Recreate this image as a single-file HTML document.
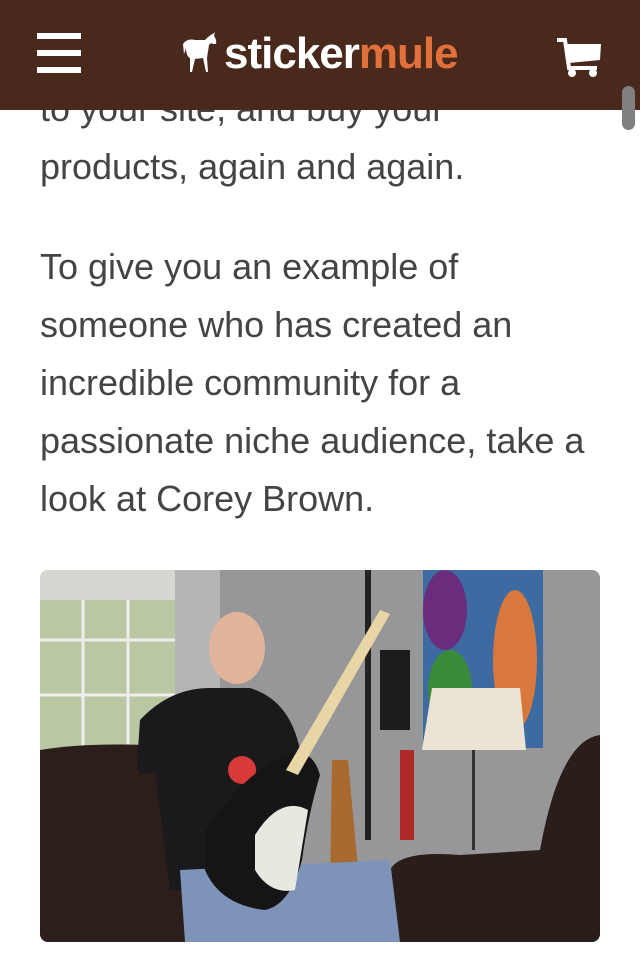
<!DOCTYPE html>
<html><head><meta charset="utf-8"><style>
html,body{margin:0;padding:0;width:640px;height:959px;overflow:hidden;background:#fff}
body{font-family:"Liberation Sans",sans-serif;color:#444;position:relative}
.hdr{position:absolute;left:0;top:0;width:640px;height:110px;background:#48291c;z-index:2}
.txt{position:absolute;left:40px;top:0;font-size:36px;line-height:58px;margin:0;width:600px;white-space:nowrap}
.sb{position:absolute;left:622px;top:86px;width:13px;height:44px;border-radius:7px;background:#808080;z-index:3}
.img{position:absolute;left:40px;top:570px;width:560px;height:372px;border-radius:8px;overflow:hidden}
</style></head><body>
<div class="hdr">
 <div style="position:absolute;left:37px;top:33px;width:44px;height:6px;background:#fff"></div>
 <div style="position:absolute;left:37px;top:50px;width:44px;height:6px;background:#fff"></div>
 <div style="position:absolute;left:37px;top:67px;width:44px;height:6px;background:#fff"></div>
 <svg style="position:absolute;left:180px;top:32px" width="42" height="42" viewBox="0 0 40 42"><path d="M2 12 Q6 6 14 8 L24 8 Q30 2 32 2 L34 0 L33 4 Q36 8 35 12 L32 12 Q30 10 28 13 L26 26 L27 40 L25 40 L22 26 L14 27 L11 40 L9 40 L9 26 Q5 24 5 16 L3 22 Z" fill="#fff"/></svg>
 <div style="position:absolute;left:224px;top:24px;font-size:44px;font-weight:bold;letter-spacing:-1px;line-height:60px;color:#fff">sticker<span style="color:#e2703a">mule</span></div>
 <svg style="position:absolute;left:555px;top:38px" width="48" height="40" viewBox="0 0 48 40"><path d="M2 2 H10 L14 30 H42" stroke="#fff" stroke-width="4" fill="none"/><path d="M10 6 H46 L45 22 L14 25 Z" fill="#fff"/><circle cx="17" cy="35" r="4" fill="#fff"/><circle cx="38" cy="35" r="4" fill="#fff"/></svg>
</div>
<div class="sb"></div>
<div class="txt" style="top:80px">to your site, and buy your<br>products, again and again.</div>
<div class="txt" style="top:238px">To give you an example of<br>someone who has created an<br>incredible community for a<br>passionate niche audience, take a<br>look at Corey Brown.</div>
<div class="img"><svg width="560" height="372" viewBox="0 0 560 372">
<rect width="560" height="372" fill="#97979a"/>
<rect x="135" y="0" width="45" height="372" fill="#b5b5b8"/>
<rect x="0" y="0" width="135" height="30" fill="#d8d6d0"/>
<rect x="0" y="30" width="135" height="150" fill="#b9c7a2"/>
<g stroke="#eee" stroke-width="3"><line x1="43" y1="30" x2="43" y2="180"/><line x1="88" y1="30" x2="88" y2="180"/><line x1="0" y1="70" x2="135" y2="70"/><line x1="0" y1="125" x2="135" y2="125"/></g>
<rect x="383" y="0" width="120" height="178" fill="#3d6aa0"/>
<ellipse cx="475" cy="90" rx="22" ry="70" fill="#d9783c"/>
<ellipse cx="405" cy="40" rx="22" ry="40" fill="#6a2d7e"/>
<ellipse cx="410" cy="120" rx="22" ry="40" fill="#3a8a3a"/>
<path d="M392 118 L480 118 L486 180 L382 180 Z" fill="#ece4d2"/>
<rect x="432" y="180" width="3" height="100" fill="#333"/>
<rect x="325" y="0" width="6" height="270" fill="#222"/>
<path d="M292 190 L308 190 L320 320 L290 320 Z" fill="#a86a2e"/>
<rect x="340" y="80" width="30" height="80" fill="#1c1c1c"/>
<rect x="360" y="180" width="14" height="90" fill="#b02a2a"/>
<path d="M0 180 Q60 170 150 178 L150 372 L0 372 Z" fill="#2c1f1b"/>
<path d="M350 300 Q360 280 420 285 L500 280 Q520 170 560 165 L560 372 L350 372 Z" fill="#2a1e1b"/>
<path d="M100 150 Q130 118 170 118 L210 118 Q250 130 260 180 L255 320 L130 320 L115 200 Q98 210 97 195 Z" fill="#1a1a1c"/>
<circle cx="202" cy="200" r="14" fill="#d73a3a"/>
<ellipse cx="197" cy="78" rx="28" ry="36" fill="#e0b49a"/>
<path d="M140 300 L350 290 L360 372 L145 372 Z" fill="#7d93b8"/>
<path d="M165 260 Q200 210 235 190 Q270 170 280 205 Q268 245 262 290 Q250 335 225 340 Q180 335 165 300 Z" fill="#151515"/>
<path d="M215 265 Q240 225 268 240 L255 320 Q230 325 215 300 Z" fill="#e8e8e0"/>
<path d="M246 200 L340 40 L350 44 L258 205 Z" fill="#e8d6a6"/>
</svg></div>
</body></html>
